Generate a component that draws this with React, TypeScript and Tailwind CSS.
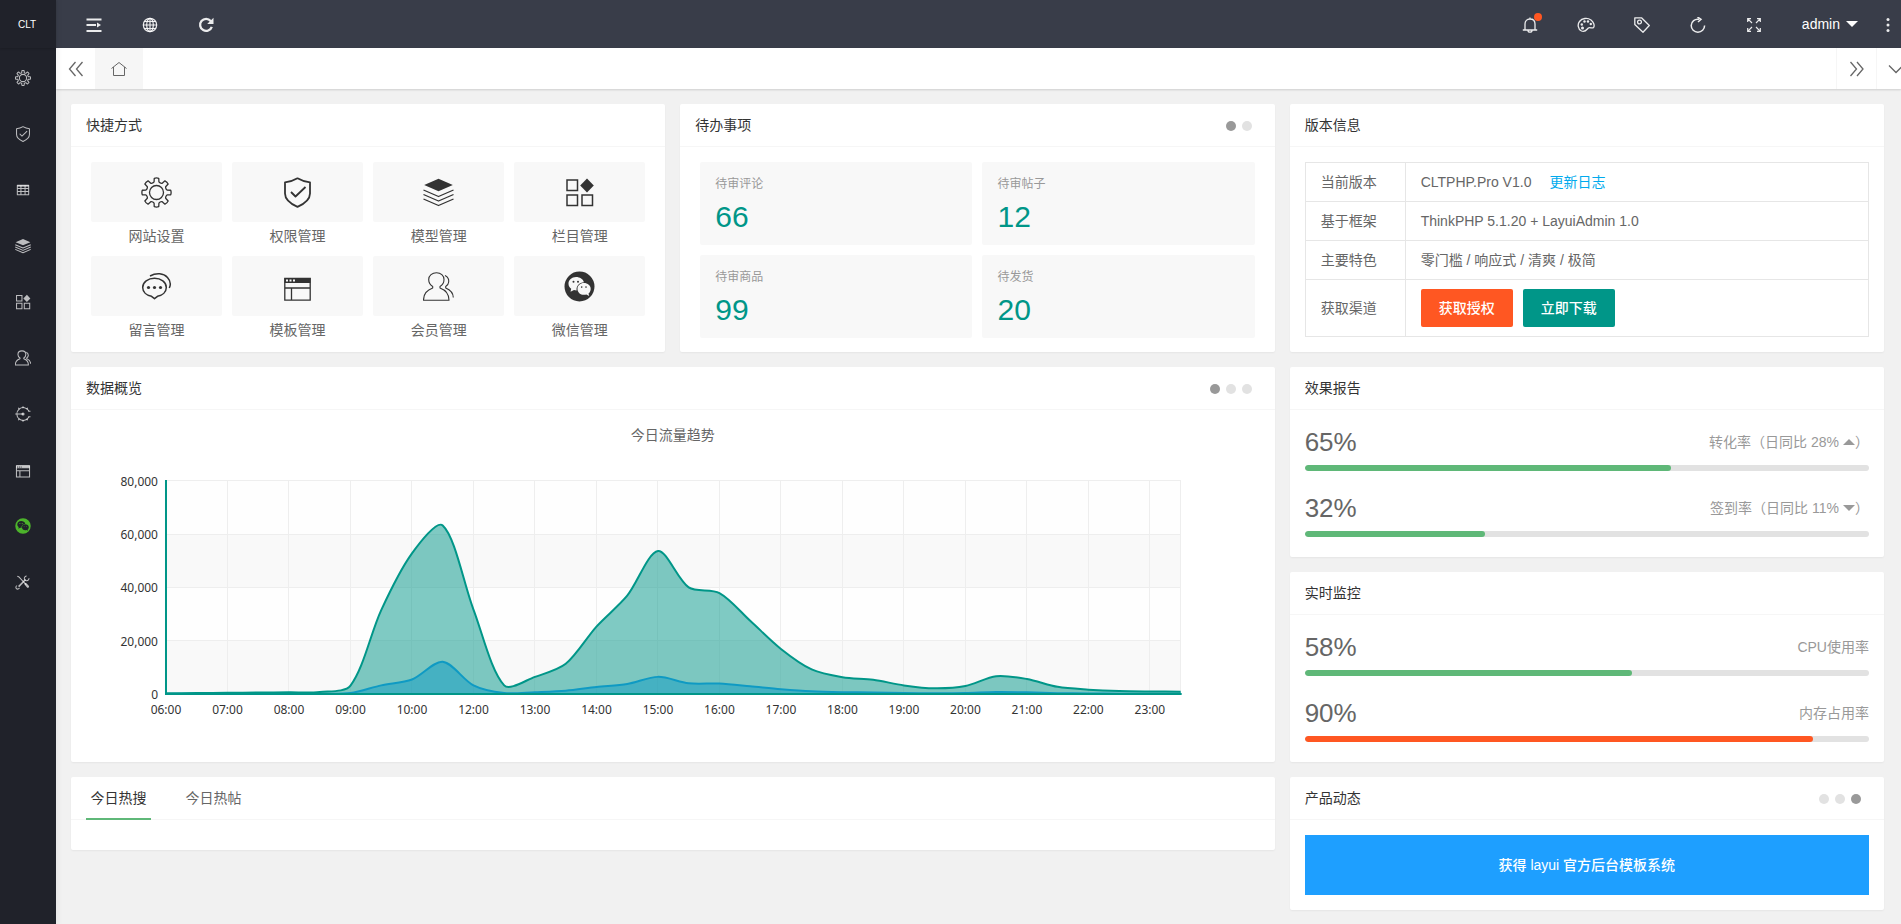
import { useState } from 'react';
import type { ReactNode } from 'react';
import clsx from 'clsx';

/* ---------- icons ---------- */

type IconProps = { className?: string };

const Svg = ({
  className = 'size-4',
  sw = 1.3,
  children,
}: {
  className?: string;
  sw?: number;
  children: ReactNode;
}) => (
  <svg
    viewBox="-15.5 -15.5 31 31"
    className={clsx('block shrink-0', className)}
    fill="none"
    stroke="currentColor"
    strokeWidth={sw}
    strokeLinejoin="round"
    aria-hidden="true"
  >
    {children}
  </svg>
);

const polar = (r: number, deg: number) => {
  const a = (deg * Math.PI) / 180;
  return `${(r * Math.sin(a)).toFixed(2)} ${(-r * Math.cos(a)).toFixed(2)}`;
};

const gearPath =
  [0, 1, 2, 3, 4, 5, 6, 7]
    .map((k) => {
      const a = k * 45;
      return `${k ? 'L' : 'M'}${polar(10.8, a - 13)} L${polar(14.4, a - 9)} Q${polar(15, a)} ${polar(14.4, a + 9)} L${polar(10.8, a + 13)} Q${polar(9.6, a + 22.5)} ${polar(10.8, a + 32)}`;
    })
    .join(' ') + 'Z';

const GearIcon = ({ className }: IconProps) => (
  <Svg className={className}>
    <path d={gearPath} />
    <circle r="7" />
  </Svg>
);

const ShieldIcon = ({ className }: IconProps) => (
  <Svg className={className} sw={1.8}>
    <path d="M0-14.2C4-11.8 8-10.6 12.5-10.2V1C12.5 7.5 6.5 11.5 0 14.4C-6.5 11.5-12.5 7.5-12.5 1V-10.2C-8-10.6-4-11.8 0-14.2Z" />
    <path d="M-6.5-.5-2 4 8-5.5" />
  </Svg>
);

const TableIcon = ({ className }: IconProps) => (
  <Svg className={className} sw={2}>
    <path d="M-11-9H11V9H-11ZM-11-3H11M-11 3H11M-4-9V9M4-9V9" />
    <path d="M-11-8H11" strokeWidth="3" />
  </Svg>
);

const LayersIcon = ({ className }: IconProps) => (
  <Svg className={className}>
    <path d="M0-13.7 14.3-7.5 0-1.3-14.3-7.5Z" fill="currentColor" stroke="none" />
    <path d="M-15-2.5 0 4 15-2.5M-15 2 0 8.5 15 2M-15 6.5 0 13 15 6.5" />
  </Svg>
);

const BlocksIcon = ({ className }: IconProps) => (
  <Svg className={className} sw={1.5}>
    <path strokeLinejoin="miter" d="M-12.5-12.5H-2V-2H-12.5ZM-12.5 2.5H-2V13H-12.5ZM2.5 2.5H13V13H2.5Z" />
    <path d="M7.5-14 14.3-7 7.5 0 .7-7Z" fill="currentColor" stroke="none" />
  </Svg>
);

const ChatIcon = ({ className }: IconProps) => (
  <Svg className={className} sw={1.5}>
    <path d="M-2 12.2-5 9.8C-10 8.800-13.8 5.5-13.8 1C-13.8-4.3-8.5-8.2-2-8.2S9.8-4.3 9.8 1C9.8 5.5 6 8.8 1 9.8Z" />
    <path d="M-6.5-10.5C0-14 7-13.3 11-9C14.5-5.2 14.5-2 12.8 1.5" />
    <g fill="currentColor" stroke="none">
      <circle cx="-8" cy="1" r="1.6" />
      <circle cx="-2" cy="1" r="1.6" />
      <circle cx="4" cy="1" r="1.6" />
    </g>
  </Svg>
);

const WindowIcon = ({ className }: IconProps) => (
  <Svg className={className}>
    <path strokeLinejoin="miter" d="M-12.7-8.2H12.7V13.7H-12.7ZM-12.7 1.5H12.7M-6 1.5V13.7" />
    <path
      fillRule="evenodd"
      fill="currentColor"
      stroke="none"
      d="M-13-8.5H13V-3.5H-13ZM-11.5-7V-5H-9.5V-7ZM-8-7V-5H-6V-7ZM-4.5-7V-5H-2.5V-7Z"
    />
  </Svg>
);

const UsersIcon = ({ className }: IconProps) => (
  <Svg className={className} sw={1.1}>
    <path d="M-15 13.7H10.5C10.5 7.5 7 3.5 1.5 1.5V0C4.3-1.7 5.5-4.2 5.5-7C5.5-11 2.3-13.8-2-13.8S-9.8-11-9.8-7C-9.8-4.2-8.5-1.7-5.8 0V1.5C-11.5 3.5-15 7.5-15 13.7Z" />
    <path d="M6.5-11C9.5-9.5 10.5-7 10.2-4.5C10-2.5 8.8-1 7.2 0V1.5C12 3.5 14.7 6.5 14.8 11" />
  </Svg>
);

const WechatIcon = ({ className }: IconProps) => (
  <Svg className={className}>
    <path
      fill="currentColor"
      stroke="none"
      fillRule="evenodd"
      d="M0-15A15 15 0 1 1 0 15A15 15 0 1 1 0-15ZM-3.5-9.5C-7.8-9.5-11-6.5-11-2.8C-11-.8-10 1-8.3 2.200L-9 5.2L-5.5 3.600C-4.7 3.8-4 3.9-2.900 3.9C-3.400-.5-.2-4 4.500-4.200C3.600-7.400.4-9.5-3.500-9.500ZM4.4-3.400C.8-3.400-2-1-2 2.400S.8 8.300 4.4 8.300C5.300 8.300 6.100 8.200 6.900 7.900L9.700 9.400L9 6.900C10.300 5.900 11.200 4.300 11.200 2.400C11.200-1 8.200-3.400 4.400-3.400Z"
    />
    <g fill="currentColor" stroke="none">
      <circle cx="-6" cy="-4.8" r="1" />
      <circle cx="-1.500" cy="-4.8" r="1" />
      <circle cx="2.200" cy=".6" r=".8" />
      <circle cx="6.500" cy=".6" r=".8" />
    </g>
  </Svg>
);

const EngineIcon = ({ className }: IconProps) => (
  <Svg className={className} sw={2.2}>
    <path d="M11.5-6A12.5 12.5 0 1 0 11.5 6M-15 0H0" />
    <path d="M0-15V-11M0 11V15M-9-12-7-9M-9 12-7 9M9-12 7-9M9 12 7 9M10-5.5H14.5M10 5.5H14.5" />
    <circle r="3" fill="currentColor" stroke="none" />
  </Svg>
);

const ToolsIcon = ({ className }: IconProps) => (
  <Svg className={className} sw={2}>
    <path d="M-11-11-7.500-9.500 6 5" />
    <path d="M5 4 9.500 9" strokeWidth="4.500" strokeLinecap="round" />
    <path d="M-8.500 9 5-5" strokeWidth="3" />
    <path d="M11.500-7.500A4.500 4.500 0 1 1 7-11.500M-11.500 7A3.500 3.500 0 1 0-7 11.500" />
  </Svg>
);

const Svg16 = ({ className = 'size-4', children, sw = 1.3 }: { className?: string; children: ReactNode; sw?: number }) => (
  <svg
    viewBox="0 0 16 16"
    className={clsx('block shrink-0', className)}
    fill="none"
    stroke="currentColor"
    strokeWidth={sw}
    aria-hidden="true"
  >
    {children}
  </svg>
);

const ShrinkIcon = () => (
  <Svg16 sw={1.8}>
    <path d="M.5 2.5H15.5M.5 8H10M.5 14H15.5" />
    <path d="M11 5.500 15 8 11 10.500Z" fill="currentColor" stroke="none" />
  </Svg16>
);

const GlobeIcon = () => (
  <Svg16 sw={1.2}>
    <circle cx="8" cy="8" r="6.7" />
    <ellipse cx="8" cy="8" rx="3.3" ry="6.7" />
    <path d="M8 1V15M1 8H15M2.3 4.5H13.7M2.3 11.5H13.7" />
  </Svg16>
);

const ReloadIcon = () => (
  <Svg16 sw={2.3}>
    <path d="M12.7 4A6 6 0 1 0 13.8 9.8" />
    <path d="M15.5.7V7H9.2Z" fill="currentColor" stroke="none" />
  </Svg16>
);

const BellIcon = () => (
  <Svg16>
    <path d="M.8 13H15.2M3 13V7C3 4 5 2 8 2S13 4 13 7V13M8 .5V2M6 13.5C6 15.7 10 15.7 10 13.5" />
  </Svg16>
);

const PaletteIcon = () => (
  <Svg16 className="h-4 w-[18px]" sw={1.3}>
    <path d="M3.5 14C-.5 12-.5 7 1.5 4.5C4 1 9.5.5 13 3C16 5.3 16.8 9 15.5 10.5C14 12 12 9.5 10.3 11C8.7 12.5 7.5 15.5 3.5 14Z" />
    <g fill="currentColor" stroke="none">
      <circle cx="3.8" cy="7.5" r="1.2" />
      <circle cx="6.5" cy="4.5" r="1.2" />
      <circle cx="10" cy="4.5" r="1.2" />
      <circle cx="12.8" cy="7" r="1.2" />
      <circle cx="4.5" cy="11" r="1.5" />
    </g>
  </Svg16>
);

const TagIcon = () => (
  <Svg16 sw={1.3}>
    <path strokeLinejoin="round" d="M.8.8H7.5L15.3 8.5 9 15.2.8 7.5Z" />
    <circle cx="5.500" cy="5" r="1.9" />
  </Svg16>
);

const RotateIcon = () => (
  <Svg16 sw={1.5}>
    <path d="M9 2.300C5 1.500 1.200 4.500 1.200 8.600C1.200 12.300 4.200 15.200 7.900 15.200C11.600 15.200 14.600 12.300 14.600 8.500" />
    <path d="M7.500 0 11 2.300 8 5" />
  </Svg16>
);

const FullscreenIcon = () => (
  <Svg16 sw={1.2}>
    <path d="M1.700 5V1.700H5M11 1.700H14.300V5M14.300 11V14.300H11M5 14.300H1.700V11M1.700 1.700 6 6M14.300 1.700 10 6M14.300 14.300 10 10M1.700 14.300 6 10" />
  </Svg16>
);

const HomeIcon = () => (
  <Svg16 sw={1}>
    <path d="M.5 7.5 8 1.5 15.5 7.5M2.5 6V14.5H13.5V6" />
  </Svg16>
);

const DoubleLeftIcon = () => (
  <Svg16 sw={1.3}>
    <path d="M7.5 1 1.5 8 7.5 15M14.5 1 8.5 8 14.5 15" />
  </Svg16>
);

const DoubleRightIcon = () => (
  <Svg16 sw={1.3}>
    <path d="M1.5 1 7.5 8 1.5 15M8 1 14 8 8 15" />
  </Svg16>
);

const DownIcon = () => (
  <Svg16 sw={1.3}>
    <path d="M1 4.5 8 11.5 15 4.5" />
  </Svg16>
);

const MoreIcon = () => (
  <Svg16>
    <g fill="currentColor" stroke="none">
      <circle cx="8" cy="2.5" r="1.5" />
      <circle cx="8" cy="8" r="1.5" />
      <circle cx="8" cy="13.5" r="1.5" />
    </g>
  </Svg16>
);

/* ---------- data ---------- */

const menu = [
  { label: '网站设置', icon: GearIcon },
  { label: '权限管理', icon: ShieldIcon },
  { label: '数据管理', icon: TableIcon },
  { label: '模型管理', icon: LayersIcon },
  { label: '栏目管理', icon: BlocksIcon },
  { label: '会员管理', icon: UsersIcon },
  { label: '功能扩展', icon: EngineIcon },
  { label: '模板管理', icon: WindowIcon },
  { label: '微信管理', icon: WechatIcon, active: true },
  { label: '工具', icon: ToolsIcon },
];

const shortcuts = [
  { label: '网站设置', icon: GearIcon },
  { label: '权限管理', icon: ShieldIcon },
  { label: '模型管理', icon: LayersIcon },
  { label: '栏目管理', icon: BlocksIcon },
  { label: '留言管理', icon: ChatIcon },
  { label: '模板管理', icon: WindowIcon },
  { label: '会员管理', icon: UsersIcon },
  { label: '微信管理', icon: WechatIcon },
];

const todos = [
  { label: '待审评论', value: 66 },
  { label: '待审帖子', value: 12 },
  { label: '待审商品', value: 99 },
  { label: '待发货', value: 20 },
];

const pv = [
  250, 300, 400, 500, 600, 750, 3100, 31500, 52800, 63300, 31700, 3200, 6400, 11300, 25300, 36900, 53700, 40000,
  37900, 27500, 16900, 9200, 6300, 5300, 3200, 2100, 2950, 6650, 5600, 2650, 1600, 1050, 900, 850,
];
const uv = [
  11, 22, 33, 44, 55, 66, 333, 3200, 5400, 12100, 3200, 333, 666, 1188, 2600, 3700, 6400, 4000, 3900, 2888, 1777, 966,
  655, 555, 333, 222, 311, 699, 588, 277, 166, 99, 88, 77,
];
const hours = [
  '06:00', '07:00', '08:00', '09:00', '10:00', '12:00', '13:00', '14:00', '15:00',
  '16:00', '17:00', '18:00', '19:00', '20:00', '21:00', '22:00', '23:00',
];

/* ---------- chart ---------- */

const CHART = { left: 80, right: 1095, top: 61, bottom: 274, max: 80000 };

const toPoints = (values: number[]) =>
  values.map((v, i) => [
    CHART.left + (i * (CHART.right - CHART.left)) / (values.length - 1),
    CHART.bottom - (v / CHART.max) * (CHART.bottom - CHART.top),
  ]);

// Bezier through every point, tangents weighted by the distance to each neighbour
const smoothPath = (pts: number[][]) => {
  const cps = pts.map((p, i) => {
    const prev = pts[i - 1] ?? p;
    const next = pts[i + 1] ?? p;
    const d0 = Math.hypot(p[0] - prev[0], p[1] - prev[1]);
    const d1 = Math.hypot(next[0] - p[0], next[1] - p[1]);
    const vx = (next[0] - prev[0]) * 0.3;
    const vy = (next[1] - prev[1]) * 0.3;
    const k0 = d0 / (d0 + d1);
    const k1 = d1 / (d0 + d1);
    return [p[0] - vx * k0, p[1] - vy * k0, p[0] + vx * k1, p[1] + vy * k1];
  });
  return pts
    .map((p, i) =>
      i === 0
        ? `M${p[0]} ${p[1]}`
        : `C${cps[i - 1][2]} ${cps[i - 1][3]} ${cps[i][0]} ${cps[i][1]} ${p[0]} ${p[1]}`,
    )
    .join('');
};

const TrafficChart = () => {
  const { left, right, top, bottom } = CHART;
  const pvLine = smoothPath(toPoints(pv));
  const uvLine = smoothPath(toPoints(uv));
  const close = `L${right} ${bottom}L${left} ${bottom}Z`;
  const rowH = (bottom - top) / 4;
  const stepX = (right - left) / 16.5;

  return (
    <svg viewBox="0 0 1174 332" className="block h-auto w-full" role="img" aria-label="今日流量趋势">
      <text
        x="587"
        y="20"
        textAnchor="middle"
        className="fill-[#666] font-['Noto_Sans','Noto_Sans_CJK_SC',sans-serif] text-[14px]"
      >
        今日流量趋势
      </text>
      {[0, 1, 2, 3].map((i) => (
        <rect
          key={i}
          x={left}
          y={top + i * rowH}
          width={right - left}
          height={rowH}
          className={i % 2 ? 'fill-[#f9f9f9]' : 'fill-[#fefefe]'}
        />
      ))}
      <g stroke="#eee" shapeRendering="crispEdges">
        {[0, 1, 2, 3].map((i) => (
          <line key={i} x1={left} x2={right} y1={top + i * rowH} y2={top + i * rowH} />
        ))}
        {hours.map((h, i) => (
          <line key={h} x1={left + i * stepX} x2={left + i * stepX} y1={top} y2={bottom} />
        ))}
        <line x1={right} x2={right} y1={top} y2={bottom} />
      </g>
      <path d={uvLine + close} fill="#1e9fff" fillOpacity="0.5" />
      <path d={uvLine} fill="none" stroke="#1e9fff" strokeWidth="2" />
      <path d={pvLine + close} fill="#009688" fillOpacity="0.5" />
      <path d={pvLine} fill="none" stroke="#009688" strokeWidth="2" />
      <path d={`M${left} ${top - 1}V${bottom}H${right + 1}`} fill="none" stroke="#009688" strokeWidth="2" />
      <g className="fill-[#333] font-['Noto_Sans',sans-serif] text-[12px]">
        {['80,000', '60,000', '40,000', '20,000', '0'].map((t, i) => (
          <text key={t} x={left - 8} y={top + i * rowH + 5} textAnchor="end">
            {t}
          </text>
        ))}
        {hours.map((h, i) => (
          <text key={h} x={left + i * stepX} y={bottom + 20} textAnchor="middle">
            {h}
          </text>
        ))}
      </g>
    </svg>
  );
};

/* ---------- pieces ---------- */

const Dots = ({ count, active }: { count: number; active: number }) => {
  const [current, setCurrent] = useState(active);
  return (
    <div className="mr-2 flex gap-1.5 pt-0.5">
      {Array.from({ length: count }, (_, i) => (
        <button
          key={i}
          type="button"
          aria-label={`${i + 1}`}
          onClick={() => setCurrent(i)}
          className={clsx('size-2.5 rounded-full', i === current ? 'bg-[#999]' : 'bg-[#e2e2e2]')}
        />
      ))}
    </div>
  );
};

const Card = ({
  title,
  dots,
  className,
  children,
}: {
  title: string;
  dots?: ReactNode;
  className?: string;
  children: ReactNode;
}) => (
  <section className={clsx('rounded-xs bg-white shadow-[0_1px_2px_rgba(0,0,0,0.05)]', className)}>
    <header className="flex h-[43px] items-center justify-between border-b border-[#f6f6f6] px-[15px]">
      <h2 className="text-[14px] text-[#333]">{title}</h2>
      {dots}
    </header>
    {children}
  </section>
);

const Meter = ({ value, bar, children }: { value: number; bar: string; children: ReactNode }) => (
  <div>
    <div className="mb-1.5 flex h-[34px] items-center justify-between">
      <span className="text-[26px] text-[#666]">{value}%</span>
      <span className="flex items-center text-[14px] text-[#999]">{children}</span>
    </div>
    <div className="h-1.5 overflow-hidden rounded-full bg-[#e2e2e2]">
      <div className={clsx('h-full rounded-full', bar)} style={{ width: `${value}%` }} />
    </div>
  </div>
);

const HeaderButton = ({ label, children }: { label: string; children: ReactNode }) => (
  <button type="button" aria-label={label} className="flex h-12 w-14 items-center justify-center pt-0.5">
    {children}
  </button>
);

const Sidebar = () => (
  <aside className="z-10 w-14 shrink-0 bg-[#20222a] shadow-[2px_0_6px_rgba(0,0,0,0.05)]">
    <a
      href="#"
      className="flex h-12 items-center pl-[18px] font-['Liberation_Sans_Narrow','Liberation_Sans',sans-serif] text-[10px] text-white shadow-[0_1px_2px_rgba(0,0,0,0.15)]"
    >
      CLT
    </a>
    <nav className="flex flex-col pt-0.5">
      {menu.map(({ label, icon: Icon, active }) => (
        <a
          key={label}
          href="#"
          aria-label={label}
          className={clsx('flex h-14 items-center pl-[15px]', active ? 'text-[#4cb32b]' : 'text-white/70')}
        >
          <Icon className="size-4 stroke-2" />
        </a>
      ))}
    </nav>
  </aside>
);

const TopBar = () => (
  <header className="flex h-12 items-center justify-between bg-[#393d49] text-white/90">
    <div className="flex pl-2.5">
      <HeaderButton label="侧边伸缩">
        <ShrinkIcon />
      </HeaderButton>
      <HeaderButton label="前台">
        <GlobeIcon />
      </HeaderButton>
      <HeaderButton label="刷新">
        <ReloadIcon />
      </HeaderButton>
    </div>
    <div className="flex">
      <HeaderButton label="消息">
        <span className="relative">
          <BellIcon />
          <span className="absolute -top-1 -right-1 size-2 rounded-full bg-[#ff5722]" />
        </span>
      </HeaderButton>
      <HeaderButton label="主题">
        <PaletteIcon />
      </HeaderButton>
      <HeaderButton label="便签">
        <TagIcon />
      </HeaderButton>
      <HeaderButton label="清除缓存">
        <RotateIcon />
      </HeaderButton>
      <HeaderButton label="全屏">
        <FullscreenIcon />
      </HeaderButton>
      <button type="button" className="flex h-12 items-center gap-1.5 px-5 text-[14px] text-white">
        admin
        <span className="border-x-6 border-t-6 border-x-transparent border-t-white" />
      </button>
      <button type="button" aria-label="更多" className="flex h-12 w-[23px] items-center pt-0.5 pl-0.5">
        <MoreIcon />
      </button>
    </div>
  </header>
);

const PageTabs = () => (
  <div className="z-[5] flex h-[41px] bg-white text-[#666] shadow-[0_1px_2px_rgba(0,0,0,0.15)]">
    <button type="button" aria-label="向左" className="flex w-[39px] items-center justify-center">
      <DoubleLeftIcon />
    </button>
    <button type="button" aria-label="主页" className="flex w-12 items-center justify-center bg-[#f6f6f6]">
      <HomeIcon />
    </button>
    <button
      type="button"
      aria-label="向右"
      className="ml-auto flex w-10 items-center justify-center border-l border-[#f6f6f6]"
    >
      <DoubleRightIcon />
    </button>
    <button
      type="button"
      aria-label="展开"
      className="flex w-[25px] items-center overflow-hidden border-l border-[#f6f6f6] pl-[11px]"
    >
      <DownIcon />
    </button>
  </div>
);

const HotTabs = () => {
  const tabs = ['今日热搜', '今日热帖'];
  const [current, setCurrent] = useState(0);
  return (
    <section className="rounded-xs bg-white pb-[30px] shadow-[0_1px_2px_rgba(0,0,0,0.05)]">
      <div role="tablist" className="flex h-[43px] gap-[30px] border-b border-[#f6f6f6] px-[15px]">
        {tabs.map((tab, i) => (
          <button
            key={tab}
            type="button"
            role="tab"
            aria-selected={i === current}
            onClick={() => setCurrent(i)}
            className={clsx(
              'h-[43px] w-[65px] border-b-2 pt-0.5 text-[14px]',
              i === current ? 'border-[#5fb878] text-[#333]' : 'border-transparent text-[#666]',
            )}
          >
            {tab}
          </button>
        ))}
      </div>
    </section>
  );
};

const Th = ({ children }: { children: ReactNode }) => (
  <th scope="row" className="w-[100px] border border-[#e6e6e6] px-[15px] text-left font-normal">
    {children}
  </th>
);

const Td = ({ children }: { children: ReactNode }) => (
  <td className="border border-[#e6e6e6] px-[15px]">{children}</td>
);

const VersionTable = () => (
  <table className="w-full border-collapse text-[14px] text-[#666]">
    <tbody>
      <tr className="h-[39px]">
        <Th>当前版本</Th>
        <Td>
          CLTPHP.Pro V1.0
          <a href="#" className="ml-[18px] text-[#01aaed]">
            更新日志
          </a>
        </Td>
      </tr>
      <tr className="h-[39px]">
        <Th>基于框架</Th>
        <Td>ThinkPHP 5.1.20 + LayuiAdmin 1.0</Td>
      </tr>
      <tr className="h-[39px]">
        <Th>主要特色</Th>
        <Td>零门槛 / 响应式 / 清爽 / 极简</Td>
      </tr>
      <tr className="h-[57px]">
        <Th>获取渠道</Th>
        <Td>
          <div className="flex gap-2.5 text-white">
            <button type="button" className="h-[38px] rounded-xs bg-[#ff5722] px-[18px] font-medium">
              获取授权
            </button>
            <button type="button" className="h-[38px] rounded-xs bg-[#009688] px-[18px] font-medium">
              立即下载
            </button>
          </div>
        </Td>
      </tr>
    </tbody>
  </table>
);

const App = () => {
  return (
    <div className="flex min-h-screen bg-[#f1f1f1] font-['Liberation_Sans','Noto_Sans_CJK_SC',sans-serif]">
      <Sidebar />
      <div className="flex min-w-0 flex-1 flex-col">
        <TopBar />
        <PageTabs />
        <main className="grid grid-cols-3 items-start gap-[15px] py-[15px] pr-[17px] pl-[15px]">
          <Card title="快捷方式" className="self-stretch">
            <ul className="grid grid-cols-4 gap-x-2.5 gap-y-[5px] px-5 pt-[15px] pb-[7px]">
              {shortcuts.map(({ label, icon: Icon }) => (
                <li key={label}>
                  <a href="#" className="block text-center text-[14px] text-[#666]">
                    <span className="flex h-[60px] items-center justify-center rounded-xs bg-[#f8f8f8] text-[#333]">
                      <Icon className="size-[31px]" />
                    </span>
                    <span className="block leading-[29px]">{label}</span>
                  </a>
                </li>
              ))}
            </ul>
          </Card>

          <Card title="待办事项" dots={<Dots count={2} active={0} />} className="self-stretch">
            <ul className="grid grid-cols-2 gap-2.5 px-5 pt-[15px]">
              {todos.map((todo) => (
                <li key={todo.label}>
                  <a href="#" className="block h-[83px] rounded-xs bg-[#f8f8f8] px-[15px] pt-2.5">
                    <h3 className="text-[12px] leading-[24px] text-[#999]">{todo.label}</h3>
                    <p className="text-[30px] leading-[42px] text-[#009688]">{todo.value}</p>
                  </a>
                </li>
              ))}
            </ul>
          </Card>

          <Card title="版本信息" className="self-stretch">
            <div className="p-[15px]">
              <VersionTable />
            </div>
          </Card>

          <div className="col-span-2 flex flex-col gap-[15px]">
            <Card title="数据概览" dots={<Dots count={3} active={0} />}>
              <div className="px-[15px] py-2.5">
                <TrafficChart />
              </div>
            </Card>
            <HotTabs />
          </div>

          <div className="flex flex-col gap-[15px]">
            <Card title="效果报告">
              <div className="flex flex-col gap-5 px-[15px] pt-[15px] pb-5">
                <Meter value={65} bar="bg-[#5fb878]">
                  转化率（日同比 28%
                  <span className="ml-1 border-x-6 border-b-6 border-x-transparent border-b-[#999]" />）
                </Meter>
                <Meter value={32} bar="bg-[#5fb878]">
                  签到率（日同比 11%
                  <span className="ml-1 border-x-6 border-t-6 border-x-transparent border-t-[#999]" />）
                </Meter>
              </div>
            </Card>

            <Card title="实时监控">
              <div className="flex flex-col gap-5 px-[15px] pt-[15px] pb-5">
                <Meter value={58} bar="bg-[#5fb878]">
                  CPU使用率
                </Meter>
                <Meter value={90} bar="bg-[#ff5722]">
                  内存占用率
                </Meter>
              </div>
            </Card>

            <Card title="产品动态" dots={<Dots count={3} active={2} />}>
              <div className="p-[15px]">
                <a
                  href="#"
                  className="flex h-[60px] items-center justify-center bg-[#1e9fff] text-[14px] font-medium text-white"
                >
                  获得 layui 官方后台模板系统
                </a>
              </div>
            </Card>
          </div>
        </main>
      </div>
    </div>
  );
};

export default App;
